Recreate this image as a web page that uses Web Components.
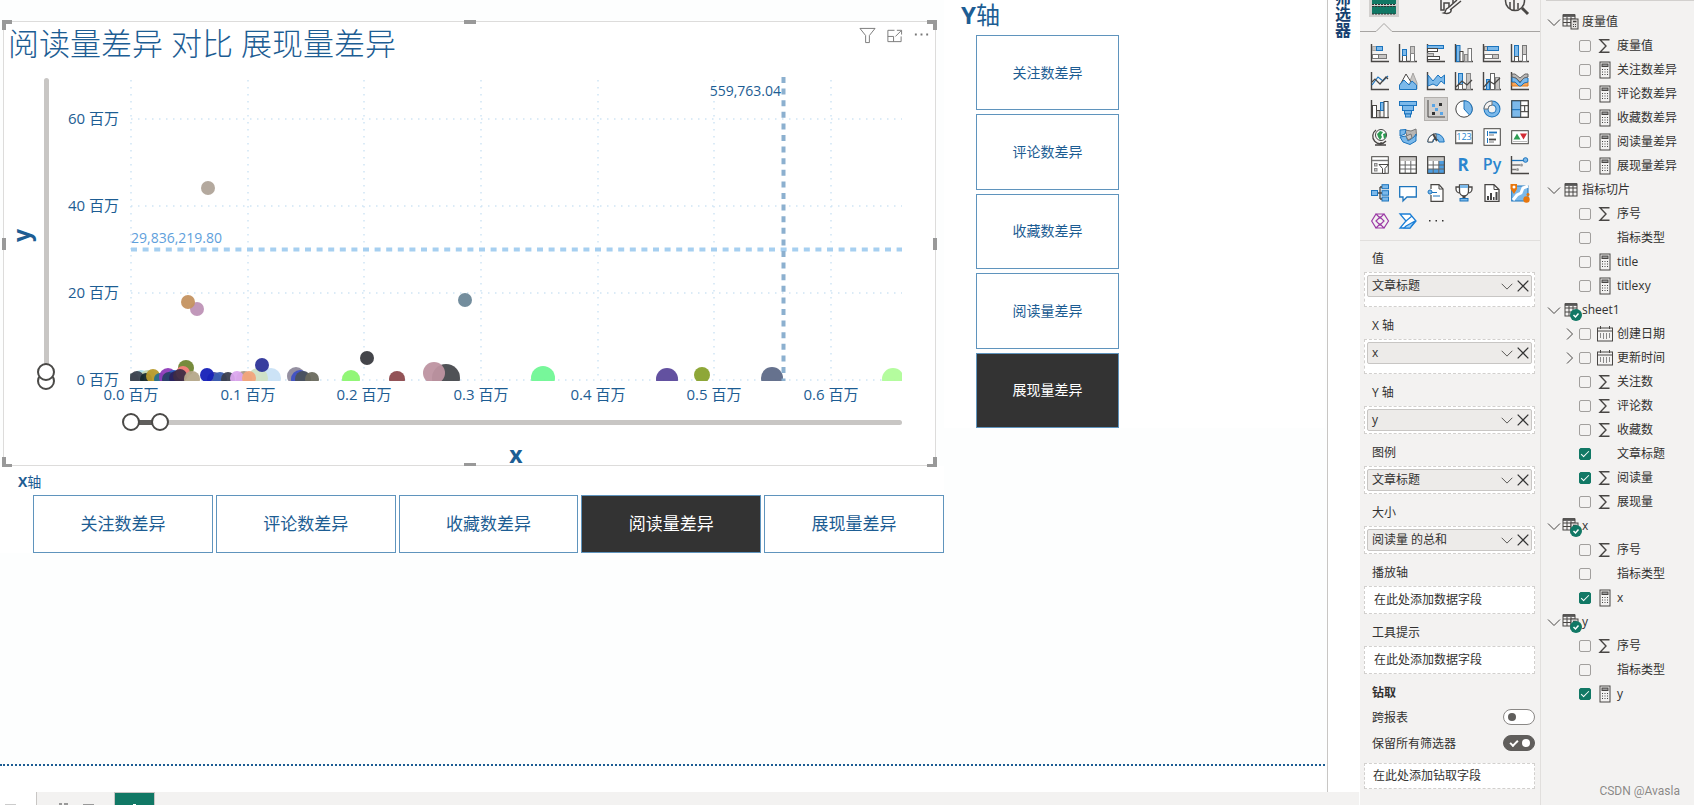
<!DOCTYPE html>
<html lang="zh-CN">
<head>
<meta charset="utf-8">
<title>阅读量差异 对比 展现量差异</title>
<style>
html,body{margin:0;height:100%}
body{font-family:"Open Sans","Noto Sans CJK SC",sans-serif;font-size:12px;color:#323130;overflow:hidden}
</style>
</head>
<body>
<app-shell>
  <report-canvas slot="report">
    <scatter-visual heading="阅读量差异 对比 展现量差异" xname="x" yname="y"></scatter-visual>
    <slicer-tiles class="x" axis="X" selected="3"></slicer-tiles>
    <slicer-tiles class="y" slot="side" axis="Y" selected="4" vertical></slicer-tiles>
  </report-canvas>
  <page-tabs slot="report"></page-tabs>
  <filter-rail slot="panes">筛选器</filter-rail>
  <viz-pane slot="panes">
    <field-well label="值" roomy><field-pill>文章标题</field-pill></field-well>
    <field-well label="X 轴" roomy><field-pill>x</field-pill></field-well>
    <field-well label="Y 轴"><field-pill>y</field-pill></field-well>
    <field-well label="图例"><field-pill>文章标题</field-pill></field-well>
    <field-well label="大小"><field-pill>阅读量 的总和</field-pill></field-well>
    <field-well label="播放轴" empty>在此处添加数据字段</field-well>
    <field-well label="工具提示" empty>在此处添加数据字段</field-well>
    <drill-options slot="drill">在此处添加钻取字段</drill-options>
  </viz-pane>
  <fields-pane slot="panes"></fields-pane>
</app-shell>

<script>
const define = (name, html, setup) => customElements.define(name, class extends HTMLElement {
  connectedCallback() {
    if (this.shadowRoot) return;
    const root = this.attachShadow({ mode: 'open' });
    const t = document.createElement('template');
    t.innerHTML = typeof html === 'function' ? html(this) : html;
    root.append(t.content.cloneNode(true));
    if (setup) setup(this, root);
  }
});

/* ---------- icons ---------- */
const G = '#484644', B = '#7cb9ea', D = '#1c74bd', L = '#a6a4a2';
const r = (x, y, w, h, f = 'none', s = G) => `<rect x="${x}" y="${y}" width="${w}" height="${h}" fill="${f}" stroke="${s}"/>`;
const p = (d, s = G, f = 'none', w = 1) => `<path d="${d}" stroke="${s}" fill="${f}" stroke-width="${w}"/>`;
const axes = p('M.5 0V17.5H18', G, 'none', 1.4);
const gridIcon = (head, extra = '') => r(.7, .7, 16.6, 16.6, '#fff') + head + extra + p('M.7 9H17.3M.7 13H17.3M6.2 5V17.3M11.8 5V17.3', '#666') + r(.7, .7, 16.6, 16.6);
const ICONS = {
  stackedBar: axes + r(1.5, 2.5, 4, 4, '#c8c6c4', L) + r(5.5, 2.5, 6, 4, B, D) + r(1.5, 10.5, 6, 4, '#fff', '#777') + r(7.5, 10.5, 8, 4, '#c8c6c4', '#777'),
  stackedCol: axes + r(3.5, 11.5, 4, 6, '#fff', '#555') + r(3.5, 5.5, 4, 6, B, D) + r(11.5, 9.5, 4, 8, '#fff', '#777') + r(11.5, 2.5, 4, 7, '#c8c6c4', '#888'),
  clusteredBar: axes + r(.5, 1.5, 16, 3, B, D) + r(.5, 4.5, 10, 3, '#fff') + r(.5, 9.5, 6, 3, '#c8c6c4', '#888') + r(.5, 12.5, 12, 3, '#fff'),
  clusteredCol: axes + r(1.5, 1.5, 3.5, 16, B, D) + r(5, 7.5, 3, 10, '#fff') + r(9.5, 10.5, 3.5, 7, '#c8c6c4', '#888') + r(13, 4.5, 3.5, 13, '#fff', '#777'),
  fullBar: axes + r(1.5, 2.5, 3, 4, '#c8c6c4', '#777') + r(4.5, 2.5, 11, 4, B, D) + r(1.5, 10.5, 8, 4, '#fff', '#777') + r(9.5, 10.5, 6, 4, '#c8c6c4', '#777'),
  fullCol: axes + r(3.5, 1.5, 4, 11, B, D) + r(3.5, 12.5, 4, 5, '#fff', '#555') + r(11.5, 1.5, 4, 9, '#c8c6c4', '#777') + r(11.5, 10.5, 4, 7, '#fff', '#777'),
  line: axes + p('M1 13L7 5L12 9L17 4', D, 'none', 1.2) + p('M1 10L4 7L9 12L15 5L17 7', G, 'none', 1.2),
  area: p('M8 17L14 1L18 11V17Z', L, '#c8c6c4') + p('M1 13L7 2L12 10', G, '#fff') + p('M.5 17.5V13L5 8L10 13L13 9L17.5 13V17.5Z', D, B),
  stackedArea: axes + p('M1 3L6 9L11 3L14 6L17.500 3V12L14 9L10 14L6 12L1 14Z', D, B),
  lineStacked: axes + r(3.5, 1.5, 4, 11, B, D) + r(3.500, 12.5, 4, 5, '#fff', '#666') + r(11.5, 1.5, 4, 16, '#c8c6c4', '#888') + p('M1 15L7 9L12 13L17 8', G, 'none', 1.3),
  lineClustered: axes + r(3.5, 7.5, 3, 10, B, D) + r(7.5, 1.5, 4, 16, '#fff', '#666') + r(12.5, 5.5, 4, 12, '#c8c6c4', '#888') + p('M1 15L6 9L11 12L17 6', G, 'none', 1.3),
  ribbon: axes + p('M1 10H5L9 13L12 10H17V14H1Z', '#e07a1a', '#f5a55c') + p('M1 5L5 6L9 11L13 5L17 6V10L13 11L10 14H8L4 10H1Z', D, B) + p('M1 2H4L9 6L14 2H17V5L13 6L9 10L5 6L1 5Z', '#666', '#b8b6b4'),
  waterfall: axes + r(1.5, 5.5, 4, 12, '#fff') + r(5.5, 10.5, 3.500, 7, '#c8c6c4') + r(9.5, 2.5, 3.500, 8, B, D) + r(13, 1.5, 4, 16, '#fff'),
  funnel: r(.5, 1.5, 17, 4, B, D) + r(3.5, 5.5, 11, 5, B, D) + r(5.5, 10.5, 7, 3.5, B, D) + r(6.5, 14, 5, 3, B, D),
  scatter: p('M1 0V17H18', G) + '<path d="M12 3h3v3h-3zM5 12h3v3H5z" fill="#333"/><path d="M5 4h3v3H5zM8 8h3v3H8zM13 12h3v3h-3z" fill="#5aa5e6"/>',
  pie: '<circle cx="9" cy="9" r="8.200" fill="#fff" stroke="#444"/>' + p('M9 9V.8A8.2 8.2 0 0 1 14.500 15Z', D, B),
  donut: '<circle cx="9" cy="9" r="6" fill="none" stroke="#1c74bd" stroke-width="5"/><circle cx="9" cy="9" r="6" fill="none" stroke="#7cb9ea" stroke-width="3"/>' + p('M1 9A8 8 0 0 1 9 1V5A4 4 0 0 0 5 9Z', '#777', '#f3f2f1'),
  treemap: r(.7, .7, 9, 9, B, D) + r(.7, 9.7, 9, 7.600, B, D) + r(9.700, .7, 7.600, 5, '#fff') + r(9.7, 5.7, 4, 6, '#fff') + r(13.7, 5.7, 3.600, 6, '#fff') + r(9.7, 11.7, 7.6, 5.6, '#fff') + r(.7, .7, 16.6, 16.6),
  map: '<circle cx="10" cy="7" r="5.500" fill="#fff" stroke="#444"/><path d="M6 6l3-3 3 1-2 3 1 2-2 3-2-3zM12 6l3-1v4l-2 2z" fill="#2d9a52"/>' + p('M5 2A7.500 7.5 0 1 0 15 13M10 14V17M4 17H15', G, 'none', 1.3),
  filledMap: p('M6 2L12 3L17 1L17.500 7L15 12L9 11Z', '#777', '#b8b6b4') + p('M1 2L7 1.500L6 6L1 8Z', D, B) + p('M1 9L7 8L9 13L15 9L17 6V13L11 16.500L4 14Z', D, B) + p('M7 8L12 6L13 10L9 12Z', '#777', '#c8c6c4'),
  gauge: p('M.8 14A8.200 8.2 0 0 1 17.2 14H12A3 3 0 0 0 6 14Z', D, B) + p('M.8 14A8.200 8.2 0 0 1 9 5.800V10A4 4 0 0 0 5.500 14Z', '#555', '#fff') + p('M6 6L10 13', G, 'none', 2),
  card: r(.7, 2.700, 16.600, 13, '#fff') + p('M1 14.500H17', '#888') + '<text x="9" y="12" font-size="9" text-anchor="middle" fill="#2a86cf" font-family="Open Sans">123</text>',
  multiRow: r(1, .7, 16.300, 16.600, '#fff') + p('M4.500 3V8M4.500 10V15', D, 'none', 1) + p('M6 4.500H14', D, 'none', 1.8) + p('M6 7H11M6 14H11', '#777') + p('M6 11.500H13', G, 'none', 1.8),
  kpi: r(.7, 2.7, 16.600, 13, '#fff') + '<path d="M2.500 11.500l3.500-6 3.500 6z" fill="#2f9e55"/><path d="M9 5.500h7l-3.500 6z" fill="#d22c35"/>' + p('M2 13.500H16', '#bbb'),
  slicer: r(.7, .7, 16.600, 16.600, '#fff') + p('M1 4.500H17', '#777', 'none', 1.400) + r(3.500, 7.500, 2.500, 2.500, '#ccc', '#888') + r(3.5, 12.500, 2.500, 2.500, '#ccc', '#888') + p('M8 8.500H17.500L14 12.500V17.500H11.500V12.500Z', G, '#fff'),
  table: gridIcon('<path d="M1 1h16v4H1z" fill="#c8c6c4"/>'),
  matrix: gridIcon('<path d="M1 1h16v4H1z" fill="#c8c6c4"/>', '<path d="M12 5h5v12h-5zM1 13h11v4H1z" fill="#4d9de0"/><path d="M6 9h6v4H6z" fill="#fff"/>'),
  rScript: '<text x="8" y="15" font-size="17" font-weight="700" text-anchor="middle" fill="#2a86cf" font-family="Open Sans">R</text>',
  python: '<text x="9" y="14" font-size="16" font-weight="600" text-anchor="middle" fill="#2a86cf" font-family="Open Sans">Py</text>',
  influencers: axes + p('M1 4.500H12', D, 'none', 1.3) + p('M1 9H9M1 13.500H5', '#777', 'none', 1.3) + '<circle cx="14.500" cy="4" r="2.300" fill="#7cb9ea" stroke="#1c74bd"/><circle cx="10.500" cy="9" r="1.500" fill="#999"/><circle cx="6.500" cy="13.500" r="1.500" fill="#999"/>',
  tree: r(.5, 6.5, 6, 5, B, D) + r(11, .7, 6.500, 4, B, D) + r(11, 6.7, 6.5, 4.5, B, D) + r(11, 13, 6.5, 4, B, D) + p('M7 9H11M9 3V15M9 3H11M9 15H11', G, 'none', 1.300),
  qna: p('M.7 2.700H17.300V13H8L4 17V13H.7Z', D, '#fff', 1.300),
  narrative: p('M4 5V.7H12L16 5V17.300H4V11', G, '#fff', 1.200) + p('M12 1V5H16', G) + p('M5 8.500H10M6 12H13', D, 'none', 1.2) + '<circle cx="3" cy="8" r="2" fill="#7cb9ea" stroke="#1c74bd"/>',
  goals: p('M4.500 1H13.500V7A4.500 5 0 0 1 4.500 7ZM4.500 3H1V5A4 4 0 0 0 5 9M13.500 3H17V5A4 4 0 0 1 13 9', G, '#fff', 1.3) + '<path d="M5 1h8v3H5z" fill="#7cb9ea"/>' + p('M9 12V15', G, 'none', 3) + r(5, 14.500, 8, 2.500, B, D),
  paginated: p('M2 .7H11L16 5.500V17.300H2Z', G, '#fff', 1.300) + p('M11 1V5.500H16', G) + '<path d="M4 12h2v4H4zM7 9h2v7H7zM10 13h1.500v3H10zM12.500 8h2v8h-2z" fill="#444"/>',
  arcgis: r(.7, 2, 16.300, 15, B, D) + p('M2 16L6 11L10 9L12 4L17 2', '#fff', 'none', 3) + '<path d="M-.5 0H6V5L3 10L-.500 5z" fill="#e8760c"/><circle cx="3" cy="3" r="1.500" fill="#fff"/><circle cx="15.500" cy="15.500" r="3.200" fill="#e8760c"/><circle cx="17" cy="10.500" r="1.500" fill="#e8760c"/>',
  powerApps: p('M5 2L9 6L13 2L17.500 9L13 16L9 12L5 16L.7 9ZM5 2H13M5 16H13M5 9L9 5L13 9L9 13Z', '#9b3aa5', 'none', 1.200),
  automate: p('M1 2H11L17 9L11 16H1L7 9Z', '#1c7fd6', '#fff', 1.3) + p('M7 9L13 4M7 14L16 9L11 16H5Z', '#1c7fd6', '#9fd0f6', 1.200),
  more: '<path d="M2 8h1.500v1.500H2zM8.500 8H10v1.500H8.500zM15 8h1.500v1.500H15z" fill="#333"/>',
  sigma: p('M13.500 2.700H4L10 9L4 15.300H13.500', G, 'none', 1.400),
  calc: r(4, 1, 10, 16, '#f3f2f1') + r(6, 3, 6, 2.500, '#999') + '<path d="M6 8h1v1H6zM8.500 8h1v1h-1zM11 8h1v1h-1zM6 10.500h1v1H6zM8.500 10.500h1v1h-1zM11 10.500h1v1h-1zM6 13h1v1H6zM8.500 13h1v1h-1zM11 13h1v1h-1z" fill="#444"/>',
  calendar: r(1.500, 3, 15, 13) + p('M1.500 6H16.500M4.500 1V4M13.500 1V4', G) + p('M4.500 8V13M7.500 8V14M10.500 8V14M13.500 8V13', '#888'),
  tbl: p('M3 3.500H15', '#666', 'none', 3) + r(3, 3, 12, 12) + p('M3 7H15M3 11H15M7 5V15M11 5V15', G),
  tblCalc: p('M1 2.500H13', '#666', 'none', 3) + r(1, 2, 12, 11) + p('M1 6H13M1 9.500H13M5 4V13M9 4V13', G) + r(9, 6, 7, 10, '#e1dfdd') + p('M11 8.500H14.500', G, 'none', 1.500) + '<path d="M11 11h1v1h-1zM13 11h1v1h-1zM11 13h1v1h-1zM13 13h1v1h-1z" fill="#444"/>',
  down: p('M3 6.500L9 12.500L15 6.500', G), right: p('M6 3.500L11.500 9L6 14.500', G), close: p('M3 3L15 15M15 3L3 15', '#333', 'none', 1.400),
  filter: p('M1 1.500H17L11 9V16.500H7V9Z', '#777'), focus: p('M9 3.500H2V15.500H16V10M2 10H8V15.500M10 10L16 4M11.500 3.500H16.500V8', '#777'), dots: '<path d="M2 7h2v2H2zM8 7h2v2H8zM14 7h2v2h-2z" fill="#777"/>'
};
define('pbi-icon', el => `<style>:host{display:block;width:18px;height:18px;flex:none}svg{display:block;overflow:visible}</style>
<svg width="100%" height="100%" viewBox="0 0 18 18" aria-hidden="true">${ICONS[el.getAttribute('name')]}</svg>`);

/* ---------- shell ---------- */
define('app-shell', `<style>
:host{display:flex;height:100vh;position:relative;overflow:hidden;background:#fdfefe}
main{flex:1;min-width:0;display:flex;flex-direction:column}
.panes{display:flex}
.mark{position:absolute;right:14px;bottom:6px;font:12px/16px Roboto,sans-serif;color:#8a8886;text-shadow:0 0 1px #fff}
</style><main><slot name="report"></slot></main><div class="panes"><slot name="panes"></slot></div><span class="mark">CSDN @Avasla</span>`);

define('report-canvas', `<style>
:host{flex:1;min-height:0;display:flex;flex-direction:column;margin-right:2px;overflow:hidden}
.page{flex:1;min-height:0;display:grid;grid-template-columns:944fr 381fr;border-bottom:2px dotted #1d5d93}
.left{padding-top:20px;min-width:0}
.gap{height:26px;background:#fff}
</style><div class="page"><div class="left"><slot></slot></div><div><slot name="side"></slot></div></div><div class="gap"></div>`);

/* ---------- slicers ---------- */
define('slicer-tiles', el => `<style>
:host{display:block;color:#1d5d93;background:#fff}
header{font-size:14px;line-height:20px;padding:6px 0 3px 18px}
b{font-weight:700}
.tiles{display:grid;grid-template-columns:repeat(5,1fr);grid-auto-rows:58px;gap:3px;margin-left:33px}
button{font:17px/24px "Open Sans","Noto Sans CJK SC",sans-serif;color:#1d5d93;background:#fff;border:1px solid #5f94bd;padding:0;margin:0}
button[aria-pressed=true]{background:#333;color:#fff}
:host([vertical]) header{font-size:24px;line-height:30px;padding:0 0 5px 17px}
:host([vertical]) .tiles{grid-template-columns:143px;grid-template-rows:repeat(5,1fr);grid-auto-rows:auto;height:393px;gap:4px;margin-left:32px}
:host([vertical]) button{font-size:14px}
</style><header><b>${el.getAttribute('axis')}</b>轴</header>
<div class="tiles">${['关注数差异', '评论数差异', '收藏数差异', '阅读量差异', '展现量差异'].map((t, i) => `<button type="button" aria-pressed="${i == el.getAttribute('selected')}">${t}</button>`).join('')}</div>`);

/* ---------- two-handle range ---------- */
define('range-slider', el => {
  const v = el.hasAttribute('vertical');
  return `<style>
:host{display:grid;--hi:${el.getAttribute('high')}%}
.rail,input{grid-area:1/1}
.rail{background:#c8c6c4;border-radius:3px;${v ? 'width:5px;margin:9px auto' : 'height:5px;margin:auto 9px'}}
.fill{background:#605e5c;${v ? '' : 'height:5px;width:var(--hi)'}}
input{appearance:none;-webkit-appearance:none;background:none;margin:0;padding:0;min-width:0;${v ? 'width:18px;height:100%;writing-mode:vertical-lr;direction:rtl' : 'width:100%;height:18px'};pointer-events:none}
input::-webkit-slider-thumb{appearance:none;-webkit-appearance:none;box-sizing:border-box;width:18px;height:18px;border:2px solid #4a4947;border-radius:50%;background:#fff;pointer-events:auto}
</style><div class="rail"><div class="fill"></div></div>
<input type="range" min="0" max="100" step="any" value="0" aria-label="${v ? 'y' : 'x'} 最小值">
<input type="range" min="0" max="100" step="any" value="${el.getAttribute('high')}" aria-label="${v ? 'y' : 'x'} 最大值">`;
});

/* ---------- scatter chart ---------- */
const bubbles = [
  [208,188,7,'#b0a499'],[197,309,7,'#be92b6'],[188,302,7,'#c49260'],[465,300,7,'#6b8798'],[367,358,7,'#3a3b40'],
  [446,378,14,'#47494d'],[434,373,11,'#be94a1'],[351,379,9,'#8cf570'],[397,379,8,'#8d4a4e'],[543,378,12,'#70f795'],
  [667,379,11,'#5b489b'],[702,375,8,'#88a22d'],[772,378,11,'#5e6a88'],[893,379,11,'#b0fc99'],
  [271,378,10,'#c9e2f5'],[258,378,10,'#cfe0c4'],[262,365,7,'#2d3499'],[296,376,9,'#8f8a9c'],[300,379,9,'#3f51c5'],[303,379,8,'#4b525c'],[312,379,7,'#6a6a5e'],
  [141,379,9,'#a9dfe8'],[148,378,8,'#c4d6b0'],[133,379,6,'#5d6e72'],[137,378,7,'#3c4350'],[146,379,6,'#16292c'],[153,376,7,'#b89b2c'],[160,379,6,'#25708f'],
  [168,377,9,'#8e3bb8'],[174,378,8,'#2c62c0'],[169,379,7,'#2a3f68'],[186,368,8,'#6f8532'],[176,378,7,'#2a2260'],[183,373,7,'#f57f7c'],[180,376,7,'#3e2c44'],
  [192,379,8,'#b5a88a'],[214,379,7,'#4a50a0'],[207,375,7,'#1520b8'],[220,379,7,'#3a5db0'],[228,379,7,'#3b3f50'],[244,379,8,'#a89a8a'],[237,378,7,'#dba6ee'],[249,378,7,'#f2a57c']
];
const xs = [131, 248, 364, 481, 598, 714, 831], ys = [380, 293, 206, 119];
define('scatter-visual', el => `<style>
:host{display:block;box-sizing:border-box;position:relative;margin:1px 8px 0 3px;height:445px;border:1px solid #dddcdb;background:#fff;color:#1d5d93}
header{display:flex;height:44px;justify-content:space-between}
h2{margin:0 0 0 4px;font-size:31px;line-height:42px;font-weight:300;white-space:nowrap}
.tools{display:flex;gap:9px;padding:4px 4px 0 0}
.tools button{border:0;background:none;padding:0;height:18px;width:18px;margin:0}
.tools pbi-icon{width:17px;height:17px}
.body{display:grid;grid-template-columns:33px 18px minmax(0,1fr)}
.yt{writing-mode:vertical-rl;transform:rotate(180deg);align-self:center;justify-self:center;margin:0 0 8px}
.yt,.xt{font-size:23px;line-height:30px;font-weight:700}
.ys{margin:3px 0 23px}
svg{display:block;width:100%;height:auto}
.xs{margin:0 24px 0 118px}
.xt{text-align:center;margin:8px 0 0 93px}
text{font-size:15px;fill:#1d5d93;font-weight:400}
i{position:absolute;box-sizing:border-box;width:10px;height:10px;border:0 solid #999}
.tl{left:-2px;top:-2px;border-width:4px 0 0 4px}.tr{right:-2px;top:-2px;border-width:4px 4px 0 0}
.bl{left:-2px;bottom:-2px;border-width:0 0 3px 4px}.br{right:-2px;bottom:-2px;border-width:0 4px 3px 0}
.tm,.bm{left:calc(50% - 6px);width:12px;height:4px;background:#999}.tm{top:-2px}.bm{bottom:-1px;height:3px}
.lm,.rm{top:calc(50% - 6px);width:4px;height:12px;background:#999}.lm{left:-2px}.rm{right:-2px}
</style>
<header><h2>${el.getAttribute('heading')}</h2><div class="tools">
<button type="button" aria-label="筛选器"><pbi-icon name="filter"></pbi-icon></button>
<button type="button" aria-label="焦点模式"><pbi-icon name="focus"></pbi-icon></button>
<button type="button" aria-label="更多选项"><pbi-icon name="dots"></pbi-icon></button></div></header>
<div class="body"><div class="yt">${el.getAttribute('yname')}</div><range-slider class="ys" vertical high="3"></range-slider>
<svg viewBox="55 66 880 347" role="img" aria-label="散点图">
<defs><clipPath id="plot"><rect x="130" y="70" width="772" height="311"/></clipPath></defs>
<g stroke="#cfe5f5" stroke-width="1.500" stroke-dasharray="1.500 5.500">${xs.map(x => `<path d="M${x} 80V380"/>`).join('')}${ys.map(y => `<path d="M131 ${y}H902"/>`).join('')}</g>
<g clip-path="url(#plot)" fill-opacity=".95">${bubbles.map(b => `<circle cx="${b[0]}" cy="${b[1]}" r="${b[2]}" fill="${b[3]}"/>`).join('')}</g>
<path d="M131 249.500H902" stroke="#a6cff0" stroke-width="4" stroke-dasharray="6 5.600"/>
<path d="M783.500 77V381" stroke="#8cb0cf" stroke-width="4" stroke-dasharray="6 5.600"/>
${xs.map((x, i) => `<text x="${x}" y="400" text-anchor="middle">0.${i} 百万</text>`).join('')}
${ys.map((y, i) => `<text x="119" y="${y + 5}" text-anchor="end">${i * 20} 百万</text>`).join('')}
<text x="131" y="243" style="font-size:14px;fill:#5f9fdc">29,836,219.80</text>
<text x="781" y="96" text-anchor="end" style="font-size:14px">559,763.04</text>
</svg></div>
<range-slider class="xs" high="3.7"></range-slider><div class="xt">${el.getAttribute('xname')}</div>
<i class="tl"></i><i class="tr"></i><i class="bl"></i><i class="br"></i><i class="tm"></i><i class="bm"></i><i class="lm"></i><i class="rm"></i>`);

/* ---------- page tabs, cut off by the window edge ---------- */
define('page-tabs', `<style>
:host{display:flex;height:13px;flex:none;overflow:hidden;background:#f3f2f1;margin-right:-32px;position:relative}
nav{display:flex}
button{margin:0;padding:0;border:0;box-sizing:border-box;height:28px;background:#f3f2f1}
.nav{width:36px;background:#fff}.tab{width:78px;border-left:1px solid #c8c6c4}.on{width:41px;background:#117865;border:1px solid #c8c6c4;border-bottom:0}
svg{display:block}
</style><nav><button class="nav" type="button" aria-label="上一页"><svg width="36" height="28"><path d="M5 13H16" stroke="#ccc" stroke-width="2"/></svg></button>
<button class="tab" type="button" aria-label="第 1 页"><svg width="77" height="28"><path d="M22 12h3M27 12h4M46 13H57" stroke="#999" stroke-width="2"/></svg></button>
<button class="on" type="button" aria-label="当前页"><svg width="39" height="28"><path d="M18 12h3" stroke="#fff" stroke-width="2"/></svg></button></nav>`);

define('filter-rail', `<style>
:host{display:block;box-sizing:border-box;width:33px;border-left:1px solid #c8c6c4;background:#fff;margin-bottom:13px}
div{writing-mode:vertical-rl;font-size:16px;line-height:24px;font-weight:700;color:#153f70;margin:-10px 0 0 2px}
</style><div><slot></slot></div>`);

/* ---------- visualizations pane ---------- */
define('viz-pane', `<style>
:host{display:flex;flex-direction:column;box-sizing:border-box;width:181px;background:#f3f2f1;border-right:1px solid #e1dfdd}
.modes{display:block}
.grid{display:grid;grid-template-columns:repeat(6,28px);grid-auto-rows:28px;padding:7px 0 5px 6px;border-bottom:1px solid #e1dfdd}
.grid button{border:1px solid transparent;background:none;padding:0;margin:2px;display:grid;place-items:center}
.grid button.on{background:#d2d0ce;border-color:#b3b0ad}
.wells{margin-top:-1px}
</style>
<svg class="modes" width="180" height="32" viewBox="1360 0 180 32" role="img" aria-label="生成视觉对象">
<path d="M1369 0h30v17h-30z" fill="#d2d0ce"/><path d="M1372 0h24v4h-24zM1372 6h24v8h-24z" fill="#117865"/><path d="M1372 4.500h24M1372 6.500h24M1372 14h24" stroke="#333" stroke-dasharray="2 1"/>
<g fill="none" stroke="#484644" stroke-width="1.500"><path d="M1441 0V10H1444V3H1449V7M1453 3V0"/><path d="M1461 1L1450 10M1457 0L1448 8M1448 8C1444 9 1447 12 1444 13C1448 14 1452 13 1451 9" fill="#fff"/>
<circle cx="1515" cy="1" r="9.500"/><path d="M1522 8L1528 14" stroke-width="3"/><path d="M1510 2V9M1514 0V10M1518 3V9"/></g>
<path d="M1360 31.500H1376L1384 23.500L1392 31.500H1540" fill="none" stroke="#a6a4a2"/></svg>
<div class="grid"></div>
<div class="wells"><slot></slot><slot name="drill"></slot></div>`, (el, root) => {
  const labels = 'stackedBar stackedCol clusteredBar clusteredCol fullBar fullCol line area stackedArea lineStacked lineClustered ribbon waterfall funnel scatter pie donut treemap map filledMap gauge card multiRow kpi slicer table matrix rScript python influencers tree qna narrative goals paginated arcgis powerApps automate more'.split(' ');
  root.querySelector('.grid').innerHTML = labels.map(n => `<button type="button" aria-label="${n}"${n === 'scatter' ? ' class="on"' : ''}><pbi-icon name="${n}"></pbi-icon></button>`).join('');
});
define('field-well', el => `<style>
:host{display:block;padding:0 5px 0 4px}
.l{padding:6px 0 0 8px;line-height:26px}
.w{box-sizing:border-box;height:28px;background:#fff;border:1px dashed #d2d0ce;padding:2px}
:host([roomy]) .w{height:35px}
:host([empty]) .w{line-height:22px;padding-left:9px}
</style><div class="l">${el.getAttribute('label')}</div><div class="w"><slot></slot></div>`);
define('field-pill', `<style>
:host{display:flex;box-sizing:border-box;height:22px;align-items:center;background:#edebe9;border:1px solid #c8c6c4;border-radius:2px;padding:0 0 0 4px;line-height:20px}
span{flex:1}button{border:0;background:none;padding:0;margin:0}pbi-icon{width:16px;height:16px}
</style><span><slot></slot></span><button type="button" aria-label="菜单"><pbi-icon name="down"></pbi-icon></button><button type="button" aria-label="移除字段"><pbi-icon name="close"></pbi-icon></button>`);
define('drill-options', `<style>
:host{display:block;padding:0 5px 0 4px}
h3{margin:0;padding:8px 0 0 8px;font-size:12px;line-height:22px}
label{display:flex;justify-content:space-between;align-items:center;height:26px;padding-left:8px}
input{appearance:none;-webkit-appearance:none;box-sizing:border-box;width:32px;height:16px;border:1px solid #8a8886;border-radius:8px;background:#fff;margin:0;display:flex;align-items:center;padding:0 4px}
input::before{content:"";width:8px;height:8px;border-radius:50%;background:#605e5c}
input:checked{background:#605e5c;border-color:#605e5c;flex-direction:row-reverse;justify-content:space-between}
input:checked::before{background:#fff}
input:checked::after{content:"";width:6px;height:3px;border:solid #fff;border-width:0 0 2px 2px;transform:rotate(-45deg);margin:0 0 2px 2px}
.w{box-sizing:border-box;height:26px;margin-top:7px;background:#fff;border:1px dashed #d2d0ce;line-height:23px;padding-left:8px}
</style><h3>钻取</h3><label>跨报表<input type="checkbox" role="switch"></label><label>保留所有筛选器<input type="checkbox" role="switch" checked></label><div class="w"><slot></slot></div>`);

/* ---------- fields pane ---------- */
define('field-group', el => `<style>
:host{display:block}
button{display:flex;align-items:center;width:100%;height:24px;border:0;background:none;padding:0 0 0 4px;margin:0;font:inherit;line-height:24px;color:inherit;text-align:left}
.tw{width:18px;height:18px;margin-right:-1px}
.ic{position:relative;margin-right:2px}
.badge{position:absolute;left:8px;top:8px;width:12px;height:12px;display:block}
</style><button type="button" aria-expanded="true"><pbi-icon class="tw" name="down"></pbi-icon><span class="ic"><pbi-icon name="${el.getAttribute('icon')}"></pbi-icon>${el.hasAttribute('used') ? '<svg class="badge" viewBox="0 0 12 12"><circle cx="6" cy="6" r="6" fill="#117865"/><path d="M3.500 6L5.500 8L8.500 4.500" fill="none" stroke="#fff" stroke-width="1.500"/></svg>' : ''}</span>${el.getAttribute('name')}</button><slot></slot>`);
define('field-item', el => {
  const ic = el.getAttribute('icon');
  return `<style>
:host{display:block}
label{display:flex;align-items:center;height:24px;line-height:24px;padding-left:20px}
.tw,.ic{width:18px;height:18px;flex:none}
input{appearance:none;-webkit-appearance:none;box-sizing:border-box;width:12px;height:12px;border:1px solid #a19f9d;border-radius:2px;margin:0 5px 0 0;flex:none;display:grid;place-items:center}
input:checked{background:#117865;border-color:#117865}
input:checked::after{content:"";width:7px;height:3px;border:solid #fff;border-width:0 0 1px 1px;transform:rotate(-45deg);margin-bottom:3px}
.ic{margin-right:3px}
</style><label><span class="tw">${el.hasAttribute('nested') ? '<pbi-icon name="right"></pbi-icon>' : ''}</span><input type="checkbox"${el.hasAttribute('checked') ? ' checked' : ''}><span class="ic">${ic ? `<pbi-icon name="${ic}"></pbi-icon>` : ''}</span><slot></slot></label>`;
});
const S = 'sigma', C = 'calc', K = 'calendar';
const model = [
  ['度量值', 'tblCalc', 0, [['度量值', S], ['关注数差异', C], ['评论数差异', C], ['收藏数差异', C], ['阅读量差异', C], ['展现量差异', C]]],
  ['指标切片', 'tbl', 0, [['序号', S], ['指标类型', ''], ['title', C], ['titlexy', C]]],
  ['sheet1', 'tbl', 1, [['创建日期', K, 0, 1], ['更新时间', K, 0, 1], ['关注数', S], ['评论数', S], ['收藏数', S], ['文章标题', '', 1], ['阅读量', S, 1], ['展现量', S]]],
  ['x', 'tblCalc', 1, [['序号', S], ['指标类型', ''], ['x', C, 1]]],
  ['y', 'tblCalc', 1, [['序号', S], ['指标类型', ''], ['y', C, 1]]]
];
define('fields-pane', `<style>
:host{display:block;box-sizing:border-box;width:153px;background:#f3f2f1;padding-top:10px;position:relative}
:host::before{content:"";position:absolute;left:5px;right:0;top:0;height:1px;background:#d2d0ce}
</style><div class="list"></div>`, (el, root) => {
  root.querySelector('.list').innerHTML = model.map(([n, ic, used, items]) => `<field-group name="${n}" icon="${ic}"${used ? ' used' : ''}>${items.map(([t, i, c, x]) => `<field-item icon="${i}"${c ? ' checked' : ''}${x ? ' nested' : ''}>${t}</field-item>`).join('')}</field-group>`).join('');
});
</script>
</body>
</html>
